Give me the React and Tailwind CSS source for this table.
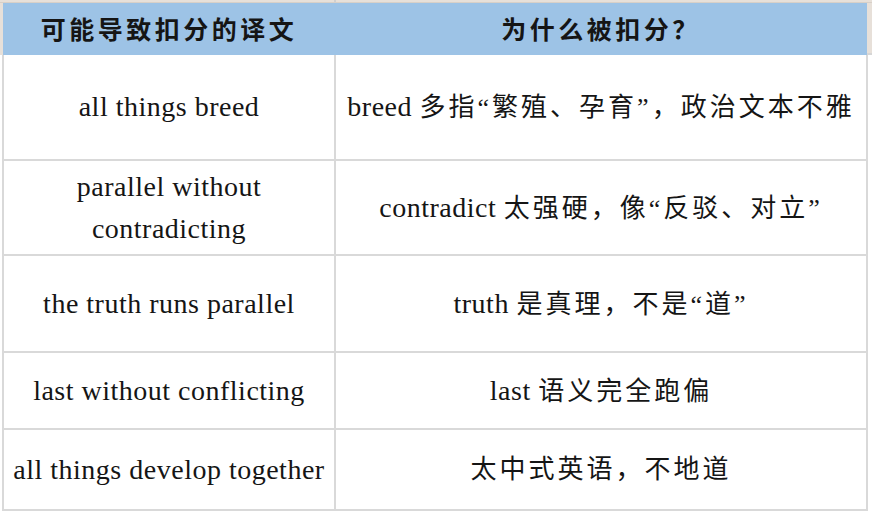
import React from "react";

// English text in the table (wide old-style serif in the original)
const En = ({ children }) => (
  <span className="font-['Liberation_Serif',serif] text-[28px] tracking-[0.5px]">{children}</span>
);

const rows = [
  {
    h: "h-[106px]",
    left: "all things breed",
    right: (
      <>
        <En>breed </En>多指“繁殖、孕育”，政治文本不雅
      </>
    ),
  },
  {
    h: "h-[95px]",
    left: (
      <>
        parallel without
        <br />
        contradicting
      </>
    ),
    right: (
      <>
        <En>contradict </En>太强硬，像“反驳、对立”
      </>
    ),
  },
  {
    h: "h-[97px]",
    left: "the truth runs parallel",
    right: (
      <>
        <En>truth </En>是真理，不是“道”
      </>
    ),
  },
  {
    h: "h-[77px]",
    left: "last without conflicting",
    right: (
      <>
        <En>last </En>语义完全跑偏
      </>
    ),
  },
  {
    h: "h-[81px]",
    left: "all things develop together",
    right: "太中式英语，不地道",
  },
];

export default function App() {
  return (
    <div className="w-[872px] h-[514px] bg-white overflow-hidden text-[#151515]">
      {/* strip left over from the row above */}
      <div className="flex h-[3px] bg-[#e7e0d9] border-b border-[#d8d0c8]">
        <div className="w-[334px]" />
        <div className="w-[2px] bg-[#cfcfcf]" />
      </div>

      {/* header */}
      <div className="flex h-[52px]">
        <div className="w-[3px] bg-[#e7e0d9]" />
        <div className="flex w-[864px] bg-[#9dc3e6] font-['Noto_Sans_CJK_SC',sans-serif] font-bold text-[25px] tracking-[3.5px]">
          <div className="w-[332px] flex items-center justify-center">可能导致扣分的译文</div>
          <div className="flex-1 flex items-center justify-center">为什么被扣分？</div>
        </div>
        <div className="flex-1 bg-[#e7e0d9] border-b-2 border-[#d6d6d6]" />
      </div>

      {/* body */}
      <div className="ml-[2px] w-[866px]">
        {rows.map((r, i) => (
          <div key={i} className={`flex ${r.h} border-b-2 border-[#d9d9d9]`}>
            <div className="w-[334px] border-l-2 border-r-2 border-[#d9d9d9] flex items-center justify-center text-center leading-[42px]">
              <En>{r.left}</En>
            </div>
            <div className="flex-1 border-r-2 border-[#d9d9d9] flex items-center justify-center text-center font-['Liberation_Serif','Noto_Sans_CJK_SC',sans-serif] text-[26px] tracking-[3px] whitespace-nowrap">
              <span>{r.right}</span>
            </div>
          </div>
        ))}
      </div>
    </div>
  );
}
